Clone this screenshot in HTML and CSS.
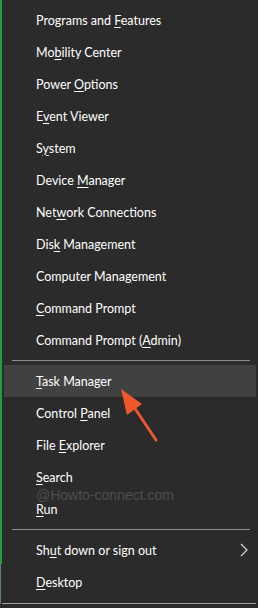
FILE: index.html
```html
<!DOCTYPE html>
<html lang="en">
<head>
    <meta charset="UTF-8">
    <title>Quick Link Menu</title>
    <link rel="stylesheet" href="styles.css">
</head>
<body>
    <div class="menu">
        <div class="group">
            <div class="item"><span>Programs and <u>F</u>eatures</span></div>
            <div class="item"><span>Mo<u>b</u>ility Center</span></div>
            <div class="item"><span>Power <u>O</u>ptions</span></div>
            <div class="item"><span>E<u>v</u>ent Viewer</span></div>
            <div class="item"><span>S<u>y</u>stem</span></div>
            <div class="item"><span>Device <u>M</u>anager</span></div>
            <div class="item"><span>Net<u>w</u>ork Connections</span></div>
            <div class="item"><span>Dis<u>k</u> Management</span></div>
            <div class="item"><span>Computer Mana<u>g</u>ement</span></div>
            <div class="item"><span><u>C</u>ommand Prompt</span></div>
            <div class="item"><span>Command Prompt (<u>A</u>dmin)</span></div>
        </div>
        <div class="separator"></div>
        <div class="group">
            <div class="item active"><span><u>T</u>ask Manager</span></div>
            <div class="item"><span>Control <u>P</u>anel</span></div>
            <div class="item"><span>File <u>E</u>xplorer</span></div>
            <div class="item"><span><u>S</u>earch</span></div>
            <div class="item"><span><u>R</u>un</span></div>
            <div class="watermark">@Howto-connect.com</div>
        </div>
        <div class="separator"></div>
        <div class="group">
            <div class="item has-sub">
                <span>Sh<u>u</u>t down or sign out</span>
                <svg class="chevron" width="8" height="14" viewBox="0 0 8 14">
                    <polyline points="1,1 7,7 1,13" fill="none" stroke="#d8d8d8" stroke-width="1.2"/>
                </svg>
            </div>
            <div class="item"><span><u>D</u>esktop</span></div>
        </div>

        <!-- annotation arrow -->
        <svg class="arrow" width="50" height="60" viewBox="0 0 50 60">
            <line x1="40" y1="54" x2="16" y2="18" stroke="#f0572a" stroke-width="2.8" stroke-linecap="round"/>
            <polygon points="5,3 26,18 11,29" fill="#f0572a"/>
        </svg>
    </div>
</body>
</html>
```

FILE: styles.css
```css
body {
    margin: 0;
    background: #2b2b2b;
    font-family: Lato, "Noto Sans", sans-serif;
    font-size: 12.5px;
    color: #ffffff;
}

.menu {
    position: relative;
    width: 256px;
    height: 604px;
    border-left: 2px solid #2a9a48;
    border-bottom: 1px solid #a0a0a0;
    background: #2b2b2b;
    box-sizing: border-box;
    padding-top: 4px;
}

.menu::after {
    content: "";
    position: absolute;
    left: -2px;
    top: 564px;
    width: 2px;
    height: 40px;
    background: #2b2b2b;
    border-left: 1px solid #5f7f80;
    box-sizing: border-box;
}

.group {
    position: relative;
}

.item {
    height: 32px;
    display: flex;
    align-items: center;
    padding-left: 34px;
    white-space: nowrap;
}

.item u {
    text-underline-offset: 2px;
}

.item.active {
    background: #414141;
    margin-left: 2px;
    padding-left: 32px;
}

.item.has-sub {
    justify-content: space-between;
    padding-right: 8px;
}

.separator {
    height: 1px;
    margin: 4px 6px 4px 10px;
    background: #8c8c8c;
}

.watermark {
    position: absolute;
    left: 34px;
    top: 122px;
    font-family: "Liberation Sans", Arial, sans-serif;
    font-size: 14px;
    color: #4e4e4e;
    pointer-events: none;
}

.arrow {
    position: absolute;
    left: 114px;
    top: 386px;
}
```
